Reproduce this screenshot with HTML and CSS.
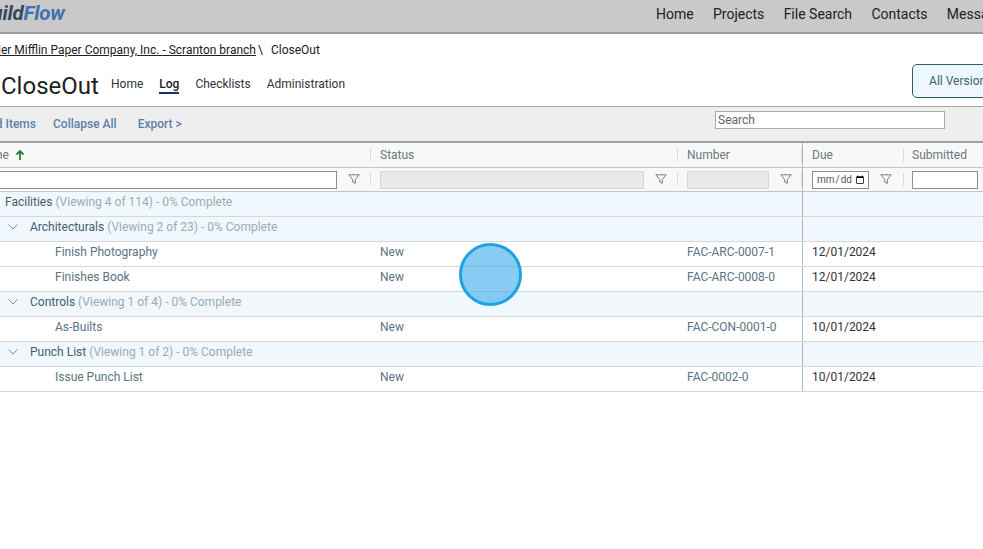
FILE: index.html
```html
<!DOCTYPE html>
<html lang="en">
<head>
<meta charset="utf-8">
<title>CloseOut</title>
<link rel="stylesheet" href="styles.css">
</head>
<body>
<div class="page">
  <header class="topbar">
    <div class="logo">Build<span class="logo-flow">Flow</span></div>
    <nav class="mainnav">
      <a>Home</a><a>Projects</a><a>File Search</a><a>Contacts</a><a>Messages</a>
    </nav>
  </header>
  <div class="crumbs"><a class="crumb-link">Dunder Mifflin Paper Company, Inc. - Scranton branch</a><span class="crumb-sep">\</span><span>CloseOut</span></div>
  <div class="titlerow">
    <h1 class="title">CloseOut</h1>
    <nav class="tabs"><a>Home</a><a class="tab-active">Log</a><a>Checklists</a><a>Administration</a></nav>
    <button class="versions">All Versions</button>
  </div>
  <div class="toolbar">
    <div class="actions"><a>Expand Items</a><a>Collapse All</a><a class="export">Export &gt;</a></div>
    <input class="search" type="text" placeholder="Search">
  </div>
  <div class="grid">
    <div class="row head">
      <div class="cell name sep">Name <svg class="sort" width="10" height="12" viewBox="0 0 10 12"><path d="M5 11V2M1.5 5.5 5 2l3.500 3.500" fill="none" stroke="#2e7d32" stroke-width="1.800"/></svg></div>
      <div class="cell sep">Status</div>
      <div class="cell sep">Number</div>
      <div class="cell due">Due</div>
      <div class="cell sep-left">Submitted</div>
    </div>
    <div class="row filters">
      <div class="cell name sep"><input class="f f-name" type="text"><svg class="funnel" viewBox="0 0 12 11"><path d="M.8.8h10.400L7.300 5.600v3.800L4.700 8V5.600z" fill="none" stroke="#6d7d88"/></svg></div>
      <div class="cell sep"><input class="f f-status" type="text" disabled><svg class="funnel" viewBox="0 0 12 11"><path d="M.8.8h10.400L7.300 5.600v3.800L4.700 8V5.600z" fill="none" stroke="#6d7d88"/></svg></div>
      <div class="cell sep"><input class="f f-number" type="text" disabled><svg class="funnel" viewBox="0 0 12 11"><path d="M.8.8h10.400L7.300 5.600v3.800L4.700 8V5.600z" fill="none" stroke="#6d7d88"/></svg></div>
      <div class="cell due"><input class="f f-due" type="date"><svg class="funnel" viewBox="0 0 12 11"><path d="M.8.8h10.400L7.300 5.600v3.800L4.700 8V5.600z" fill="none" stroke="#6d7d88"/></svg></div>
      <div class="cell sep-left"><input class="f f-sub" type="text"></div>
    </div>
    <div class="row group">
      <div class="cell name lvl1"><svg class="chev" viewBox="0 0 10 6"><path d="M.5.500 5 5 9.500.5" fill="none" stroke="#7b8c98"/></svg><span class="gname">Facilities</span>&nbsp;<span class="gmeta">(Viewing 4 of 114) - 0% Complete</span></div>
      <div class="cell"></div><div class="cell"></div><div class="cell due"></div><div class="cell"></div>
    </div>
    <div class="row group">
      <div class="cell name lvl2"><svg class="chev" viewBox="0 0 10 6"><path d="M.5.500 5 5 9.500.5" fill="none" stroke="#7b8c98"/></svg><span class="gname">Architecturals</span>&nbsp;<span class="gmeta">(Viewing 2 of 23) - 0% Complete</span></div>
      <div class="cell"></div><div class="cell"></div><div class="cell due"></div><div class="cell"></div>
    </div>
    <div class="row item">
      <div class="cell name task">Finish Photography</div><div class="cell">New</div><div class="cell">FAC-ARC-0007-1</div><div class="cell due date">12/01/2024</div><div class="cell"></div>
    </div>
    <div class="row item">
      <div class="cell name task">Finishes Book</div><div class="cell">New</div><div class="cell">FAC-ARC-0008-0</div><div class="cell due date">12/01/2024</div><div class="cell"></div>
    </div>
    <div class="row group">
      <div class="cell name lvl2"><svg class="chev" viewBox="0 0 10 6"><path d="M.5.500 5 5 9.500.5" fill="none" stroke="#7b8c98"/></svg><span class="gname">Controls</span>&nbsp;<span class="gmeta">(Viewing 1 of 4) - 0% Complete</span></div>
      <div class="cell"></div><div class="cell"></div><div class="cell due"></div><div class="cell"></div>
    </div>
    <div class="row item">
      <div class="cell name task">As-Builts</div><div class="cell">New</div><div class="cell">FAC-CON-0001-0</div><div class="cell due date">10/01/2024</div><div class="cell"></div>
    </div>
    <div class="row group">
      <div class="cell name lvl2"><svg class="chev" viewBox="0 0 10 6"><path d="M.5.500 5 5 9.500.5" fill="none" stroke="#7b8c98"/></svg><span class="gname">Punch List</span>&nbsp;<span class="gmeta">(Viewing 1 of 2) - 0% Complete</span></div>
      <div class="cell"></div><div class="cell"></div><div class="cell due"></div><div class="cell"></div>
    </div>
    <div class="row item">
      <div class="cell name task">Issue Punch List</div><div class="cell">New</div><div class="cell">FAC-0002-0</div><div class="cell due date">10/01/2024</div><div class="cell"></div>
    </div>
  </div>
</div>
<div class="pointer"></div>
</body>
</html>
```

FILE: styles.css
```css
* { box-sizing: border-box; }
html, body { margin: 0; height: 100%; overflow: hidden; background: #fff; }
body { font-family: Roboto, "Liberation Sans", sans-serif; font-size: 12px; color: #222; }
.page { width: 1300px; margin-left: -45px; }

.topbar { display: grid; grid-template-columns: 701px 1fr; height: 34px; background: #c9c9c9; border-bottom: 2px solid #9d9d9d; }
.logo { font: italic 700 20.500px/26px Roboto, sans-serif; color: #36485a; padding-left: 24px; letter-spacing: -.2px; }
.logo-flow { color: #3e72b0; }
.mainnav { display: flex; gap: 19.300px; font-size: 14px; line-height: 28px; color: #222; }

.crumbs { display: flex; height: 30px; padding: 9px 0 0 18px; line-height: 14px; color: #222; }
.crumb-link { text-decoration: underline; }
.crumb-sep { margin: 0 8px 0 2px; }

.titlerow { display: flex; align-items: flex-start; height: 43px; border-bottom: 1px solid #a6a6a6; }
.title { margin: 7px 0 0 46px; font-size: 24px; font-weight: 400; line-height: 30px; color: #222; width: 110px; }
.tabs { display: flex; gap: 16px; margin-top: 10px; line-height: 20px; color: #333; }
.tab-active { color: #222; font-weight: 500; border-bottom: 2px solid #1b2a6b; height: 20px; text-decoration: none; }
.versions { margin: 0 0 0 567px; width: 130px; height: 34px; padding: 0 0 0 16px; text-align: left; font: 12px Roboto, sans-serif; color: #3e5f70; background: #eef7fd; border: 1px solid #2f5d6e; border-radius: 5px; }

.toolbar { display: grid; grid-template-columns: 760px 230px; height: 36px; background: #eee; border-bottom: 2px solid #a0a0a0; }
.actions { display: flex; padding: 10px 0 0 0; line-height: 14px; font-weight: 500; color: #5d80a8; }
.actions a { margin-right: 17px; }
.actions a:first-child { width: 81px; margin-right: 17px; white-space: nowrap; text-align: right; }
.actions .export { margin-left: 4px; }
.search { height: 18px; margin-top: 4px; padding: 0 2px; border: 1px solid #aaa; background: #fff; font: 12px Roboto, sans-serif; color: #333; }
.search::placeholder { color: #666; opacity: 1; }

.grid { width: 1300px; }
.row { display: grid; grid-template-columns: 416px 307px 124px 101px 352px; height: 25px; border-bottom: 1px solid #d4d8db; color: #5b7383; }
.cell { display: flex; align-items: center; padding: 0 0 4px 9px; height: 100%; position: relative; white-space: nowrap; }
.name { padding-left: 0; }
.due { border-left: 1px solid #b5b5b5; }
.sep::after, .sep-left::before { content: ""; position: absolute; top: 5px; bottom: 5px; width: 1px; background: #dcdcdc; }
.sep::after { right: 0; }
.sep-left::before { left: 0; }

.head { background: #f8f8f8; color: #6a7780; border-bottom: 1px solid #c4c4c4; }
.head .cell { padding-bottom: 0; }
.head .name { padding-left: 22px; gap: 4px; }
.sort { margin-left: 2px; }

.filters { height: 24px; background: #f8f8f8; border-bottom: 1px solid #c4c4c4; }
.filters .cell { padding-bottom: 0; }
.f { height: 18px; padding: 0 2px; border: 1px solid #8f8f8f; background: #fff; border-radius: 0; font: 11px Roboto, sans-serif; }
.f:disabled { background: #e9e9e9; border-color: #d6d6d6; }
.f-name { width: 382px; }
.f-status { width: 264px; }
.f-number { width: 82px; }
.f-due { width: 57px; padding: 0 1px 0 3px; color: #555; font-size: 10px; }
.f-sub { width: 66px; }
.funnel { width: 12px; height: 11px; margin-left: 11px; flex: none; }

.group { background: #f0f7fd; }
.chev { width: 10px; height: 6px; flex: none; margin-right: 12px; }
.lvl1 { padding-left: 25px; }
.lvl1 .chev { margin-right: 15px; }
.lvl2 { padding-left: 53px; }
.gname { color: #46606f; }
.gmeta { color: #9caab4; }
.task { padding-left: 100px; }
.item { background: #fff; }
.date { color: #333; }

.pointer { position: absolute; left: 459px; top: 243px; width: 63px; height: 63px; border-radius: 50%; background: rgba(58, 170, 235, .6); border: 3px solid #1ea3e2; }
```
